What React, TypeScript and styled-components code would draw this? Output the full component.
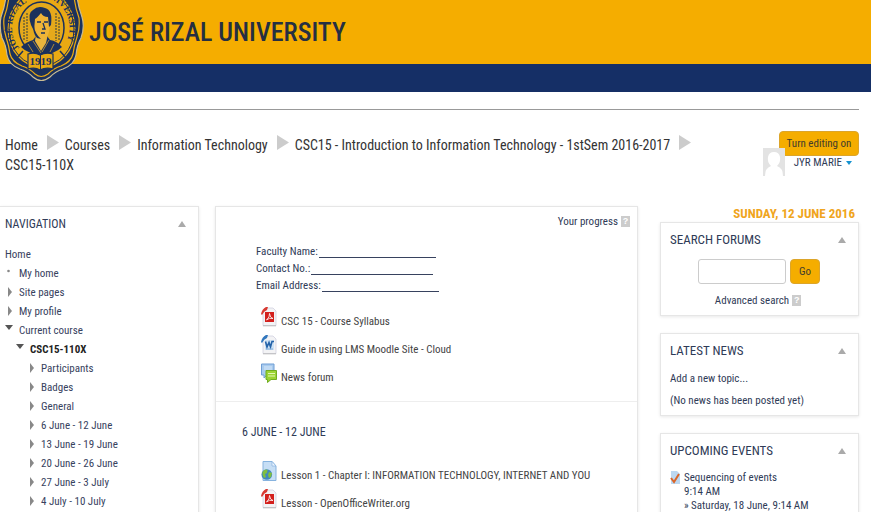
import React from 'react';
import styled, { createGlobalStyle, css } from 'styled-components';

const GlobalStyle = createGlobalStyle`
  * { box-sizing: border-box; }
  body {
    margin: 0;
    background: #fff;
    color: #2f3b57;
    font: 11px/17px "Roboto Condensed", "Liberation Sans Narrow", Roboto, "Liberation Sans", Arial, sans-serif;
  }
  h1, h2, h3, p, ul { margin: 0; padding: 0; font-weight: normal; }
  ul { list-style: none; }
  a { color: inherit; text-decoration: none; }
`;

const Page = styled.div`
  height: 100vh;
  overflow: hidden;
`;

const Masthead = styled.header`
  position: relative;
  background: #f5ad00;
  border-bottom: 28px solid #152f66;
  height: 92px;
  padding: 13px 0 0 89px;
`;

const SiteTitle = styled.h1`
  color: #252f42;
  font-size: 26px;
  font-weight: 500;
  line-height: 38px;
  white-space: nowrap;
`;

const SealSlot = styled.div`
  position: absolute;
  left: 0;
  top: 0;
  svg { display: block; }
`;

const Content = styled.div`
  margin-right: 12px;
`;

const TopBar = styled.div`
  display: flex;
  justify-content: space-between;
  align-items: flex-start;
  margin-top: 17px;
  padding-top: 21px;
  border-top: 1px solid #999;
`;

const Crumbs = styled.nav`
  flex: 1;
  display: flex;
  flex-wrap: wrap;
  padding: 4px 0 0 5px;
  color: #333;
  font-size: 14px;
  line-height: 20px;
`;

const Crumb = styled.span`
  display: flex;
  gap: 9px;
  margin-right: 6px;
`;

const Account = styled.div`
  position: relative;
  width: 96px;
  display: flex;
  flex-direction: column;
  align-items: flex-end;
`;

const buttonLook = css`
  border: 1px solid #dca52a;
  border-radius: 4px;
  background: #f5ad00;
  color: #423c2c;
  font: inherit;
  padding: 0;
  white-space: nowrap;
`;

const EditButton = styled.button`
  ${buttonLook}
  width: 80px;
  height: 25px;
`;

const UserMenu = styled.a`
  display: flex;
  align-items: center;
  gap: 4px;
  margin-right: 7px;
  line-height: 14px;
`;

const Avatar = styled.div`
  position: absolute;
  left: 0;
  top: 17px;
  svg { display: block; }
`;

const Columns = styled.div`
  display: grid;
  grid-template-columns: 199px minmax(0, 1fr) 199px;
  align-items: start;
  margin-top: 31px;
`;

const Panel = styled.section`
  border: 1px solid #e6e6e6;
  box-shadow: 0 1px 3px #e8e8e8;
  background: #fff;
`;

const NavPanel = styled(Panel)`
  border-left: 0;
  padding: 7px 0 20px 5px;
`;

const MainPanel = styled(Panel)`
  margin: 0 22px 0 16px;
`;

const PanelHead = styled.div<{ $size: number }>`
  display: flex;
  justify-content: space-between;
  align-items: center;
  padding-right: 12px;
  line-height: 20px;
  h2 { font-size: ${p => p.$size}px; }
`;

const Tree = styled.ul`
  padding-top: 11px;
`;

const TreeItem = styled.li<{ $level: number; $bold?: boolean }>`
  display: flex;
  align-items: center;
  height: 19px;
  padding-left: ${p => [0, 0, 11, 22][p.$level]}px;
  font-weight: ${p => (p.$bold ? 'bold' : 'normal')};
  color: ${p => (p.$bold ? '#222' : '#37425e')};
`;

const Marker = styled.span`
  width: 14px;
  height: 12px;
  flex: none;
  svg { display: block; }
`;

const Progress = styled.div`
  display: flex;
  justify-content: flex-end;
  align-items: center;
  gap: 3px;
  padding: 6px 7px 0 0;
`;

const HelpButton = styled.button`
  width: 9px;
  height: 11px;
  padding: 0;
  border: 0;
  background: #ccc;
  color: #fff;
  font: bold 9px/11px "Liberation Sans", sans-serif;
`;

const Faculty = styled.div`
  padding: 13px 0 0 40px;
`;

const FacultyLine = styled.p`
  display: flex;
  gap: 1px;
  align-items: flex-end;
  height: 17px;
`;

const Blank = styled.span<{ $w: number }>`
  width: ${p => p.$w}px;
  height: 14px;
  margin-bottom: 2px;
  border-bottom: 1px solid #37425e;
`;

const Resources = styled.ul`
  padding: 13px 0 10px 45px;
`;

const Resource = styled.li`
  height: 28px;
  a { display: flex; align-items: flex-start; gap: 4px; color: #444; }
  span { padding-top: 6px; }
  svg { flex: none; }
`;

const Week = styled.section`
  border-top: 1px solid #eee;
  padding-top: 20px;
  h3 { font-size: 12px; line-height: 20px; padding: 0 0 6px 26px; }
`;

const Side = styled.aside`
  display: flex;
  flex-direction: column;
`;

const Today = styled.p`
  padding-right: 4px;
  text-align: right;
  font-weight: bold;
  color: #f0a520;
  font-size: 13px;
  line-height: 16px;
`;

const Block = styled(Panel)`
  margin-bottom: 17px;
  padding: 7px 0 6px 9px;
`;

const SearchForm = styled.form`
  display: flex;
  justify-content: center;
  gap: 4px;
  padding: 9px 10px 8px 0;
`;

const SearchInput = styled.input`
  width: 88px;
  height: 25px;
  border: 1px solid #ccc;
  border-radius: 3px;
  padding: 0 4px;
  font: inherit;
`;

const GoButton = styled.button`
  ${buttonLook}
  width: 30px;
  height: 25px;
`;

const Advanced = styled.div`
  display: flex;
  align-items: center;
  justify-content: center;
  gap: 3px;
  padding-right: 12px;
`;

const News = styled.div`
  padding-top: 9px;
  display: grid;
  gap: 5px;
`;

const EventItem = styled.div`
  display: flex;
  gap: 4px;
  padding-top: 10px;
  line-height: 14px;
  svg { flex: none; }
`;

const Seal = () => (
  <svg width="84" height="82" viewBox="0 0 84 82" role="img" aria-label="University seal">
    <path d="M6 -4 Q5 6 1 17 Q-1 27 2 38 Q6 45 7 55 Q9 65 20 69 Q27 71 33 77 Q41 84 50 77 Q56 71 63 69 Q74 65 76 55 Q77 45 81 38 Q85 27 82 17 Q78 6 77 -4Z" fill="#1b315c" stroke="#c9bc93" strokeWidth="1.2" />
    <path d="M9 -4 Q8 7 4 18 Q3 28 6 37 Q9 46 10 54 Q12 62 22 66 Q29 68 35 74 Q41 79 48 74 Q54 68 61 66 Q71 62 73 54 Q74 46 77 37 Q80 28 79 18 Q75 7 74 -4Z" fill="none" stroke="#e9aa13" strokeWidth="1.2" />
    <ellipse cx="41.500" cy="29" rx="34" ry="39" fill="#e9aa13" />
    <ellipse cx="41.500" cy="29" rx="32.500" ry="37" fill="none" stroke="#1b315c" strokeWidth="1" />
    <ellipse cx="41.500" cy="28" rx="22.500" ry="26" fill="#e5a91b" stroke="#1b315c" strokeWidth="1.500" />
    <path id="sealLeft" d="M19.500 48 A25 28 0 0 1 38 0" fill="none" />
    <path id="sealRight" d="M43 -1 A25 29 0 0 1 63 47.500" fill="none" />
    <g fontFamily="Liberation Serif, serif" fontSize="9" fontWeight="bold" fill="#1b315c">
      <text><textPath href="#sealLeft">JOSÉ RIZAL</textPath></text>
      <text><textPath href="#sealRight">UNIVERSITY</textPath></text>
    </g>
    <g stroke="#6e6135" strokeWidth="1.500" strokeDasharray="2 1">
      <path d="M24 17v24M27 13v28M56 13v28M59 17v23" />
    </g>
    <path d="M21 47 Q26 42 33 40 L36 36 H47 L50 40 Q57 41 62 47 Q55 54 41.500 55 Q28 54 21 47Z" fill="#1b315c" />
    <path d="M36 34 L35 41 L41 51 L46 43 L48 34Z" fill="#e9b53d" />
    <path d="M32 19 Q33 10 41 9 Q50 9 50 21 Q50 34 46 38 Q42 41 38 38 Q32 31 32 19Z" fill="#efb437" />
    <path d="M31 25 Q27 13 33 10 Q38 5 45 8 Q53 10 51 25 L49 27 L48 17 Q43 17 41 13 Q37 18 35 19 L34 31Z" fill="#1b315c" />
    <path d="M37 22h4M44 22h4M43 23l2 6h-3M41 33h4" stroke="#1b315c" strokeWidth="1.300" fill="none" />
    <path d="M34 26 Q35 34 41 39 L37 38 Q32 32 34 26Z" fill="#1b315c" />
    <path d="M33 41l8 12M49 40l-7 12M28 44l5 8M54 44l-4 8" stroke="#d3a02d" strokeWidth=".8" />
    <path d="M23 51l-7 8M60 51l7 8" stroke="#1b315c" strokeWidth="1.500" />
    <path d="M28 54 Q35 52 40 55 Q46 52 53 54 V69 Q46 67 40 70 Q35 67 28 69Z" fill="#e9aa13" stroke="#1b315c" strokeWidth="1.200" />
    <path d="M40.500 55V70" stroke="#1b315c" />
    <text x="40.500" y="65" textAnchor="middle" fontFamily="Liberation Serif, serif" fontSize="11" fontWeight="bold" fill="#1b315c">1919</text>
  </svg>
);

const CrumbArrow = () => (
  <svg width="12" height="15" viewBox="0 0 12 15" aria-hidden="true"><path d="M0 0L12 7.500L0 15Z" fill="#ccc" /></svg>
);
const Up = () => (
  <svg width="8" height="6" viewBox="0 0 8 6" aria-hidden="true"><path d="M4 0L8 6H0Z" fill="#aaa" /></svg>
);
const Right = () => (
  <svg width="10" height="10" viewBox="0 0 10 10" aria-hidden="true"><path d="M3 0L7 5L3 10Z" fill="#888" /></svg>
);
const Down = () => (
  <svg width="8" height="6" viewBox="0 0 8 6" aria-hidden="true"><path d="M0 0H8L4 5Z" fill="#555" /></svg>
);
const Dot = () => (
  <svg width="8" height="6" viewBox="0 0 8 6" aria-hidden="true"><circle cx="3.500" cy="3" r="1.300" fill="#888" /></svg>
);
const Caret = () => (
  <svg width="6" height="4" viewBox="0 0 6 4" aria-hidden="true"><path d="M0 0H6L3 4Z" fill="#1592d0" /></svg>
);
const Person = () => (
  <svg width="22" height="28" viewBox="0 0 22 28" role="img" aria-label="User picture">
    <path d="M0 0H22V28H0Z" fill="#e3e3e3" />
    <path d="M2 28Q2 20 8 18Q4 14 5 9Q6 4 11 4Q16 4 17 9Q18 14 14 18Q20 20 20 28Z" fill="#fff" />
  </svg>
);

const Paper = ({ children, corner }: { children: React.ReactNode; corner: string }) => (
  <svg width="16" height="20" viewBox="0 0 16 20" aria-hidden="true">
    <path d="M4 1H12L15 4V18.500H2V5Z" fill="#f3f3f5" stroke="#ccd" strokeWidth=".7" />
    <path d="M2 18.800H15" stroke="#bbb" />
    <path d="M0 7Q1 2 5 0H7L6 3Q3 4 1 8Z" fill={corner} />
    {children}
  </svg>
);
const Pdf = () => (
  <Paper corner="#d83a32">
    <path d="M4 5H13V15H4Z" fill="#d3201d" />
    <path d="M5.500 13Q9 10 8.500 6.500Q9 11 12 11.500Q8 10.500 5.500 13" stroke="#fff" strokeWidth=".8" fill="none" />
  </Paper>
);
const Word = () => (
  <Paper corner="#3277bd">
    <path d="M4 5H13V15H4Z" fill="#cfe3f5" />
    <path d="M4.500 6.500L6 12L8 7.500L9.500 12L11 6.500H13" stroke="#2563a9" strokeWidth="1.600" fill="none" />
    <path d="M5 14H12" stroke="#7ba8d5" />
  </Paper>
);
const Forum = () => (
  <svg width="16" height="20" viewBox="0 0 16 20" aria-hidden="true">
    <path d="M.500 1H13V12H6L3 15V12H.500Z" fill="#a9cbee" stroke="#6f9ed5" />
    <path d="M3 4H11M3 6H11" stroke="#d9eafa" />
    <path d="M5 7.500H15.500V16.500H10L6.500 19.500V16.500H5Z" fill="#9bd432" stroke="#70ac20" />
    <path d="M7 10.500H14M7 13H14" stroke="#e2f6b2" />
  </svg>
);
const WebPage = () => (
  <svg width="16" height="20" viewBox="0 0 16 20" aria-hidden="true">
    <path d="M2 .500H11L15 5V19.500H2Z" fill="#c6def5" stroke="#87b3df" />
    <path d="M11 .500V5H15Z" fill="#eef6ff" stroke="#87b3df" strokeWidth=".7" />
    <circle cx="5.800" cy="13.500" r="5.300" fill="#4289be" />
    <path d="M1.500 11Q4 7.500 6.500 9L6 12L4 13L5 16L3 17Q1 14 1.500 11ZM8 11l3 1-1 4-2 1-1-3Z" fill="#81bf3f" />
  </svg>
);
const Task = () => (
  <svg width="10" height="14" viewBox="0 0 10 14" aria-hidden="true">
    <path d="M1 0H7L10 3V13H1Z" fill="#bcd8f1" />
    <path d="M1 7L4 11L9 3" stroke="#d9662a" strokeWidth="2" fill="none" />
  </svg>
);

const crumbs = ['Home', 'Courses', 'Information Technology', 'CSC15 - Introduction to Information Technology - 1stSem 2016-2017'];

const tree: { label: string; level: number; mark?: 'dot' | 'right' | 'down' }[] = [
  { label: 'Home', level: 0 },
  { label: 'My home', level: 1, mark: 'dot' },
  { label: 'Site pages', level: 1, mark: 'right' },
  { label: 'My profile', level: 1, mark: 'right' },
  { label: 'Current course', level: 1, mark: 'down' },
  { label: 'CSC15-110X', level: 2, mark: 'down' },
  ...['Participants', 'Badges', 'General', '6 June - 12 June', '13 June - 19 June', '20 June - 26 June', '27 June - 3 July', '4 July - 10 July']
    .map(label => ({ label, level: 3, mark: 'right' as const })),
];

const marks = { dot: <Dot />, right: <Right />, down: <Down /> };

const Item = ({ icon, children }: { icon: React.ReactNode; children: React.ReactNode }) => (
  <Resource><a href="#">{icon}<span>{children}</span></a></Resource>
);

const Head = ({ children, size = 13 }: { children: React.ReactNode; size?: number }) => (
  <PanelHead $size={size}><h2>{children}</h2><Up /></PanelHead>
);

export default function App() {
  return (
    <Page>
      <GlobalStyle />
      <Masthead>
        <SealSlot><Seal /></SealSlot>
        <SiteTitle>JOSÉ RIZAL UNIVERSITY</SiteTitle>
      </Masthead>
      <Content>
        <TopBar>
          <Crumbs aria-label="Breadcrumb">
            {crumbs.map(c => <Crumb key={c}><a href="#">{c}</a><CrumbArrow /></Crumb>)}
            <Crumb><a href="#">CSC15-110X</a></Crumb>
          </Crumbs>
          <Account>
            <EditButton type="button">Turn editing on</EditButton>
            <UserMenu href="#">JYR MARIE <Caret /></UserMenu>
            <Avatar><Person /></Avatar>
          </Account>
        </TopBar>
        <Columns>
          <NavPanel>
            <Head size={12}>NAVIGATION</Head>
            <Tree>
              {tree.map(t => (
                <TreeItem key={t.label} $level={t.level} $bold={t.level === 2}>
                  {t.mark && <Marker>{marks[t.mark]}</Marker>}
                  <a href="#">{t.label}</a>
                </TreeItem>
              ))}
            </Tree>
          </NavPanel>
          <MainPanel as="main">
            <Progress>Your progress <HelpButton type="button" aria-label="Help with progress">?</HelpButton></Progress>
            <Faculty>
              <FacultyLine>Faculty Name: <Blank $w={117} /></FacultyLine>
              <FacultyLine>Contact No.: <Blank $w={122} /></FacultyLine>
              <FacultyLine>Email Address: <Blank $w={117} /></FacultyLine>
            </Faculty>
            <Resources>
              <Item icon={<Pdf />}>CSC 15 - Course Syllabus</Item>
              <Item icon={<Word />}>Guide in using LMS Moodle Site - Cloud</Item>
              <Item icon={<Forum />}>News forum</Item>
            </Resources>
            <Week>
              <h3>6 JUNE - 12 JUNE</h3>
              <Resources>
                <Item icon={<WebPage />}>Lesson 1 - Chapter I: INFORMATION TECHNOLOGY, INTERNET AND YOU</Item>
                <Item icon={<Pdf />}>Lesson - OpenOfficeWriter.org</Item>
              </Resources>
            </Week>
          </MainPanel>
          <Side>
            <Today>SUNDAY, 12 JUNE 2016</Today>
            <Block>
              <Head>SEARCH FORUMS</Head>
              <SearchForm>
                <SearchInput aria-label="Search forums" />
                <GoButton type="submit">Go</GoButton>
              </SearchForm>
              <Advanced><a href="#">Advanced search</a><HelpButton type="button" aria-label="Help with search">?</HelpButton></Advanced>
            </Block>
            <Block>
              <Head>LATEST NEWS</Head>
              <News>
                <p><a href="#">Add a new topic...</a></p>
                <p>(No news has been posted yet)</p>
              </News>
            </Block>
            <Block>
              <Head>UPCOMING EVENTS</Head>
              <EventItem>
                <Task />
                <div>
                  <a href="#">Sequencing of events</a>
                  <p>9:14 AM</p>
                  <p>» Saturday, 18 June, 9:14 AM</p>
                </div>
              </EventItem>
            </Block>
          </Side>
        </Columns>
      </Content>
    </Page>
  );
}
